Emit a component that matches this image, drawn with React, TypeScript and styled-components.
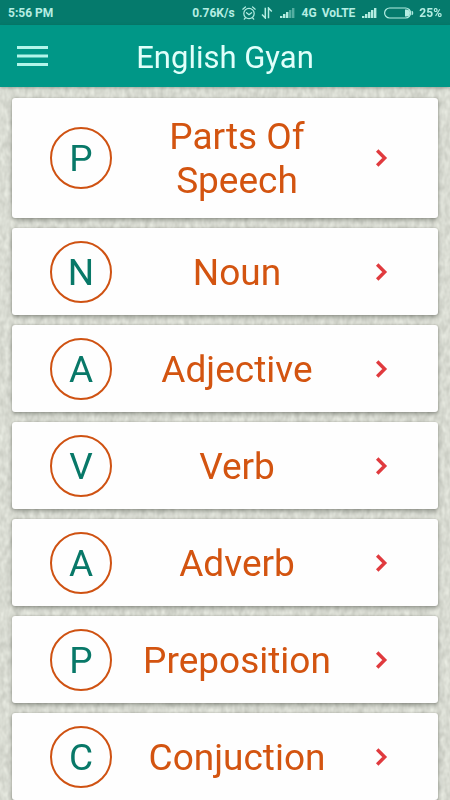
import React from "react";
import styled, { createGlobalStyle } from "styled-components";

const GlobalStyle = createGlobalStyle`
  * { box-sizing: border-box; }
  body {
    margin: 0;
    background: #d6d9d0;
    font-family: Roboto, "Liberation Sans", sans-serif;
  }
  button { font: inherit; border: 0; background: none; padding: 0; cursor: pointer; }
`;

const Screen = styled.div`
  display: flex;
  flex-direction: column;
  height: 100vh;
`;

const Paper = styled.svg`
  position: fixed;
  inset: 0;
  width: 100%;
  height: 100%;
  z-index: -1;
`;

const StatusBar = styled.div`
  display: flex;
  flex: none;
  align-items: center;
  justify-content: space-between;
  height: 25px;
  padding: 0 8px;
  background: #057a6c;
  color: #b5ede2;
  font-size: 12px;
  font-weight: 700;
  white-space: nowrap;
`;

const StatusGroup = styled.div`
  display: flex;
  align-items: center;
  gap: 7px;
`;

const StatusIcon = styled.svg`
  display: block;
  flex: none;
`;

const TightGroup = styled.div`
  display: flex;
  align-items: center;
  gap: 5px;
`;

const Header = styled.header`
  display: grid;
  flex: none;
  grid-template-columns: 48px 1fr 48px;
  align-items: center;
  height: 62px;
  background: #009787;
  box-shadow: 0 1px 3px rgba(50, 60, 50, 0.35);
`;

const MenuButton = styled.button`
  display: flex;
  justify-content: flex-end;
  color: #b2f5ea;
`;

const Title = styled.h1`
  margin: 0;
  padding-top: 4px;
  color: #e0fffa;
  font-size: 31px;
  font-weight: 400;
  line-height: 40px;
  text-align: center;
`;

const TopicList = styled.main`
  display: flex;
  flex: 1;
  flex-direction: column;
  gap: 10px;
  min-height: 0;
  padding: 11px 12px 0;
  overflow-y: auto;
  scrollbar-width: none;
`;

const TopicCard = styled.button`
  display: grid;
  flex: none;
  grid-template-columns: 62px 1fr 38px;
  column-gap: 12px;
  align-items: center;
  width: 100%;
  min-height: 87px;
  && { padding: 0 38px; }
  border-radius: 3px;
  && { background: #fefefe; }
  box-shadow: 0 2px 4px rgba(60, 64, 56, 0.45), 0 0 2px rgba(60, 64, 56, 0.2);
`;

const Badge = styled.span`
  display: flex;
  align-items: center;
  justify-content: center;
  width: 62px;
  height: 62px;
  padding-top: 2px;
  border: 2px solid #cf5212;
  border-radius: 50%;
  color: #087868;
  font-size: 37px;
  line-height: 44px;
`;

const TopicName = styled.span`
  padding: 17px 0 15px;
  color: #d35410;
  font-size: 37px;
  line-height: 44px;
  text-align: center;
`;

const Chevron = styled.svg`
  display: block;
  justify-self: center;
`;

const topics = [
  "Parts Of Speech",
  "Noun",
  "Adjective",
  "Verb",
  "Adverb",
  "Preposition",
  "Conjuction",
];

function PaperTexture() {
  return (
    <Paper aria-hidden="true">
      <filter id="grain" x="0" y="0" width="100%" height="100%" colorInterpolationFilters="sRGB">
        <feTurbulence type="fractalNoise" baseFrequency="0.2 0.12" numOctaves="2" seed="4" />
        <feColorMatrix
          values="0.18 0 0 0 0.76
                  0.18 0 0 0 0.77
                  0.18 0 0 0 0.735
                  0 0 0 0 1"
        />
      </filter>
      <rect width="100%" height="100%" filter="url(#grain)" />
    </Paper>
  );
}

function AlarmIcon() {
  return (
    <StatusIcon width="14" height="14" viewBox="0 0 14 14" fill="none" stroke="currentColor" strokeLinecap="round">
      <circle cx="7" cy="7.5" r="5.2" strokeWidth="1.2" />
      <path d="M4.5 6.7 7 8.8l2.6-2.1" strokeWidth="1.2" />
      <path d="M.8 3.2 3.4 1M13.2 3.2 10.6 1M3.3 12l-1 1.2M10.7 12l1 1.2" strokeWidth="1.2" />
    </StatusIcon>
  );
}

function TransferIcon() {
  return (
    <StatusIcon width="12" height="12" viewBox="0 0 12 12" fill="none" stroke="currentColor" strokeWidth="1.5">
      <path d="M4.3.8v10.2L1 7.6M7.5 11.2V1l3.3 3.4" />
    </StatusIcon>
  );
}

function SignalIcon({ strength }: { strength: number }) {
  return (
    <StatusIcon width="15" height="12" viewBox="0 0 15 12" fill="currentColor">
      {[0, 1, 2, 3, 4].map((bar) => (
        <rect
          key={bar}
          x={bar * 3}
          y={9 - bar * 2}
          width="2.4"
          height={bar * 2 + 2}
          opacity={bar < strength ? 1 : 0.45}
        />
      ))}
    </StatusIcon>
  );
}

function BatteryIcon() {
  return (
    <StatusIcon width="30" height="12" viewBox="0 0 30 12">
      <rect x=".6" y="1" width="26" height="10" rx="5" fill="none" stroke="currentColor" strokeWidth="1.2" />
      <path d="M21 2.5h1.5a3.5 3.5 0 0 1 0 7H21z" fill="currentColor" />
      <path d="M28 4q2 2 0 4z" fill="currentColor" stroke="currentColor" strokeWidth=".6" />
    </StatusIcon>
  );
}

export default function App() {
  return (
    <Screen>
      <GlobalStyle />
      <PaperTexture />
      <StatusBar>
        <span>5:56 PM</span>
        <StatusGroup>
          <span>0.76K/s</span>
          <TightGroup>
            <AlarmIcon />
            <TransferIcon />
          </TightGroup>
          <SignalIcon strength={3} />
          <TightGroup>
            <span>4G</span>
            <span>VoLTE</span>
          </TightGroup>
          <SignalIcon strength={5} />
          <TightGroup>
            <BatteryIcon />
            <span>25%</span>
          </TightGroup>
        </StatusGroup>
      </StatusBar>
      <Header>
        <MenuButton aria-label="Open menu">
          <svg width="31" height="22" viewBox="0 0 31 22" fill="currentColor" aria-hidden="true">
            <path d="M0 1h31v3H0zM0 9.5h31v3H0zM0 18h31v3H0z" />
          </svg>
        </MenuButton>
        <Title>English Gyan</Title>
      </Header>
      <TopicList>
        {topics.map((topic) => (
          <TopicCard key={topic}>
            <Badge aria-hidden="true">{topic[0]}</Badge>
            <TopicName>{topic}</TopicName>
            <Chevron width="14" height="20" viewBox="0 0 14 20" fill="none" aria-hidden="true">
              <path d="m3.2 2.5 7.5 7.5-7.5 7.5" stroke="#e03a3e" strokeWidth="3.4" />
            </Chevron>
          </TopicCard>
        ))}
      </TopicList>
    </Screen>
  );
}
